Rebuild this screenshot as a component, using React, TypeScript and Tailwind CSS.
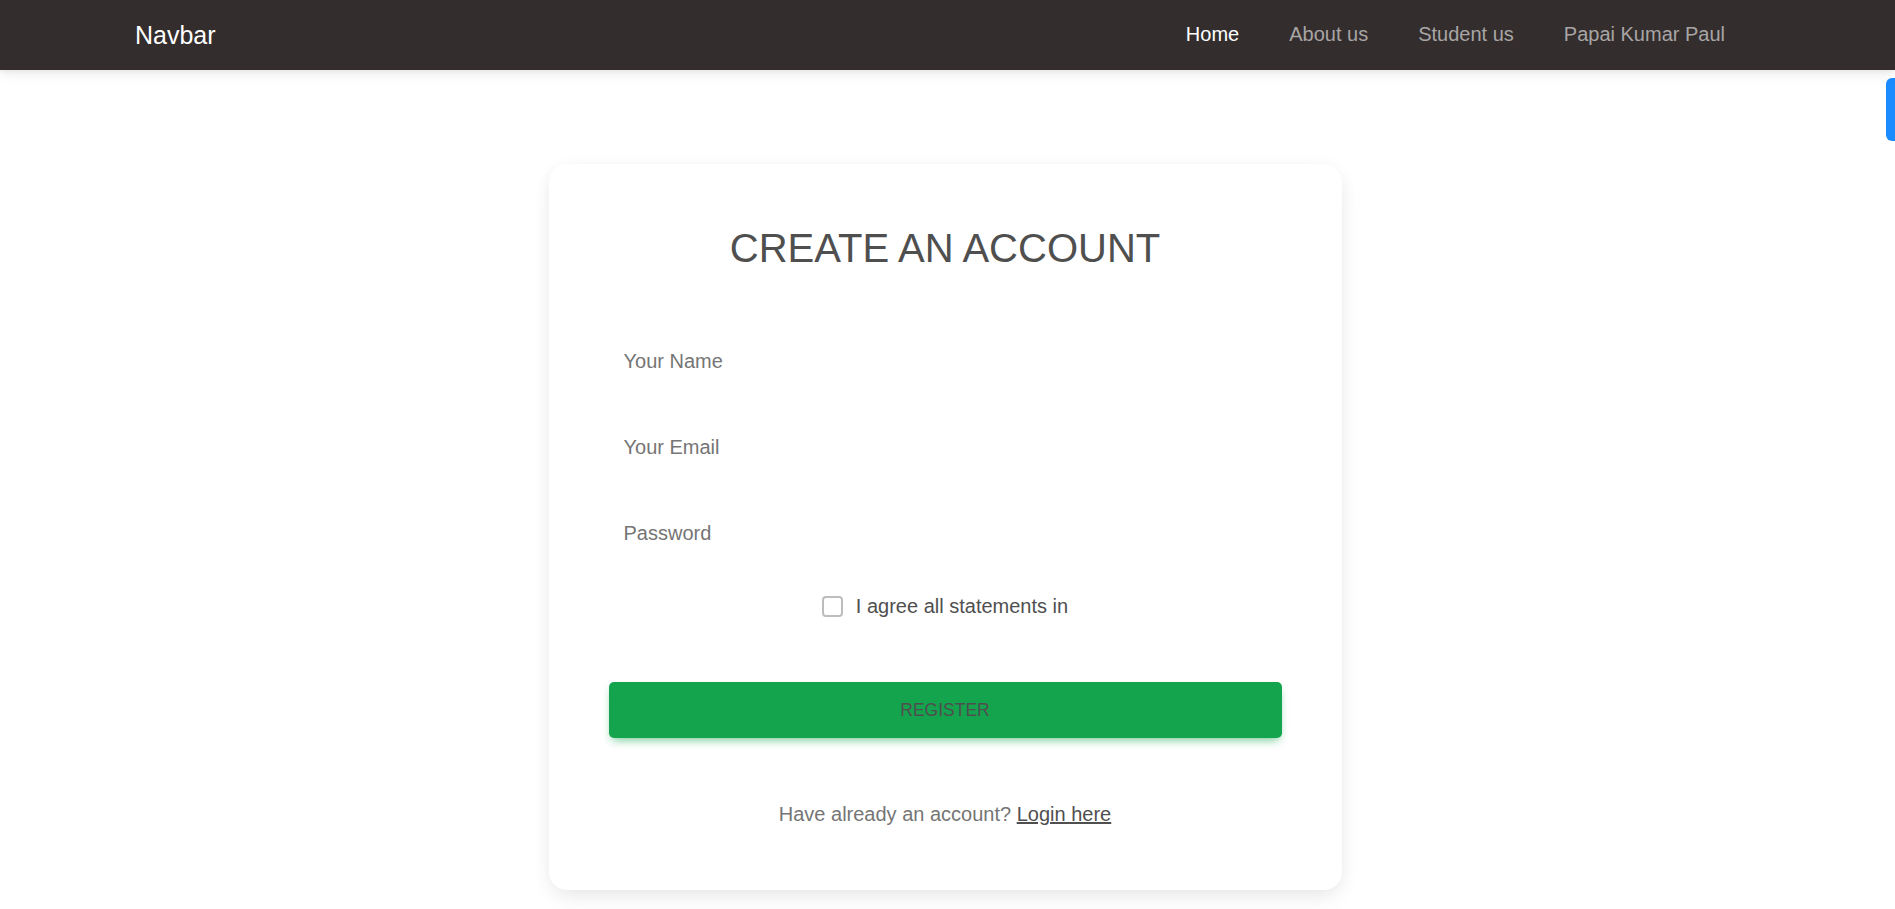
import React from 'react'

const links = [
  { label: 'Home', active: true },
  { label: 'About us', active: false },
  { label: 'Student us', active: false },
  { label: 'Papai Kumar Paul', active: false },
]

const fields = ['Your Name', 'Your Email', 'Password']

const App = () => {
  return (
    <div className="min-h-[909px] bg-white font-['Liberation_Sans',Arial,sans-serif]">
      {/* Navbar */}
      <nav className="relative z-10 h-[70px] bg-[#332d2d] shadow-[0_4px_12px_0_rgba(0,0,0,0.07),0_2px_4px_rgba(0,0,0,0.05)]">
        <div className="flex h-full items-center pt-[1px] pl-[135px] pr-[170px]">
          <span className="text-[25px] leading-none text-white">Navbar</span>
          <ul className="ml-auto flex items-center gap-[50px]">
            {links.map((link) => (
              <li key={link.label}>
                <a
                  href="#"
                  className={`text-[20px] leading-none ${link.active ? 'text-white' : 'text-[#a8a5a5]'}`}
                >
                  {link.label}
                </a>
              </li>
            ))}
          </ul>
        </div>
      </nav>

      {/* side tab */}
      <div className="absolute right-0 top-[78px] h-[63px] w-[9px] rounded-l-[6px] bg-[#1a8cff]" />

      {/* Register card */}
      <section className="flex justify-center pt-[94px] pr-[5px]">
        <div className="w-[793px] rounded-[18px] bg-white p-[60px] pb-[61px] shadow-[0_3px_19px_-4px_rgba(0,0,0,0.09),0_12px_25px_-3px_rgba(0,0,0,0.05)]">
          <h2 className="mb-[61px] text-center text-[40px] leading-[48px] text-[#4f4f4f] uppercase">
            Create an account
          </h2>

          <form onSubmit={(e) => e.preventDefault()}>
            {fields.map((field) => (
              <div key={field} className="mb-[30px] flex h-[56px] items-center">
                <input
                  type={field === 'Password' ? 'password' : 'text'}
                  placeholder={field}
                  className="h-full w-full rounded-[6px] bg-transparent pl-[15px] text-[20px] text-[#4f4f4f] outline-none placeholder:text-[#757575]"
                />
              </div>
            ))}

            <div className="mb-[61px] flex h-[30px] items-center justify-center gap-[13px]">
              <span className="block h-[21px] w-[21px] rounded-[4px] border-2 border-[#bdbdbd] bg-white" />
              <label className="text-[20px] leading-[30px] text-[#4f4f4f]">I agree all statements in</label>
            </div>

            <button
              type="submit"
              className="flex h-[56px] w-full items-center justify-center rounded-[5px] bg-[#14a44d] text-[17.5px] text-[#4f4f4f] uppercase shadow-[0_5px_10px_-3px_rgba(20,164,77,0.6)]"
            >
              Register
            </button>

            <p className="mt-[61px] text-center text-[20px] leading-[30px] text-[#757575]">
              Have already an account?{' '}
              <a href="#" className="text-[#4f4f4f] underline">
                Login here
              </a>
            </p>
          </form>
        </div>
      </section>
    </div>
  )
}

export default App
